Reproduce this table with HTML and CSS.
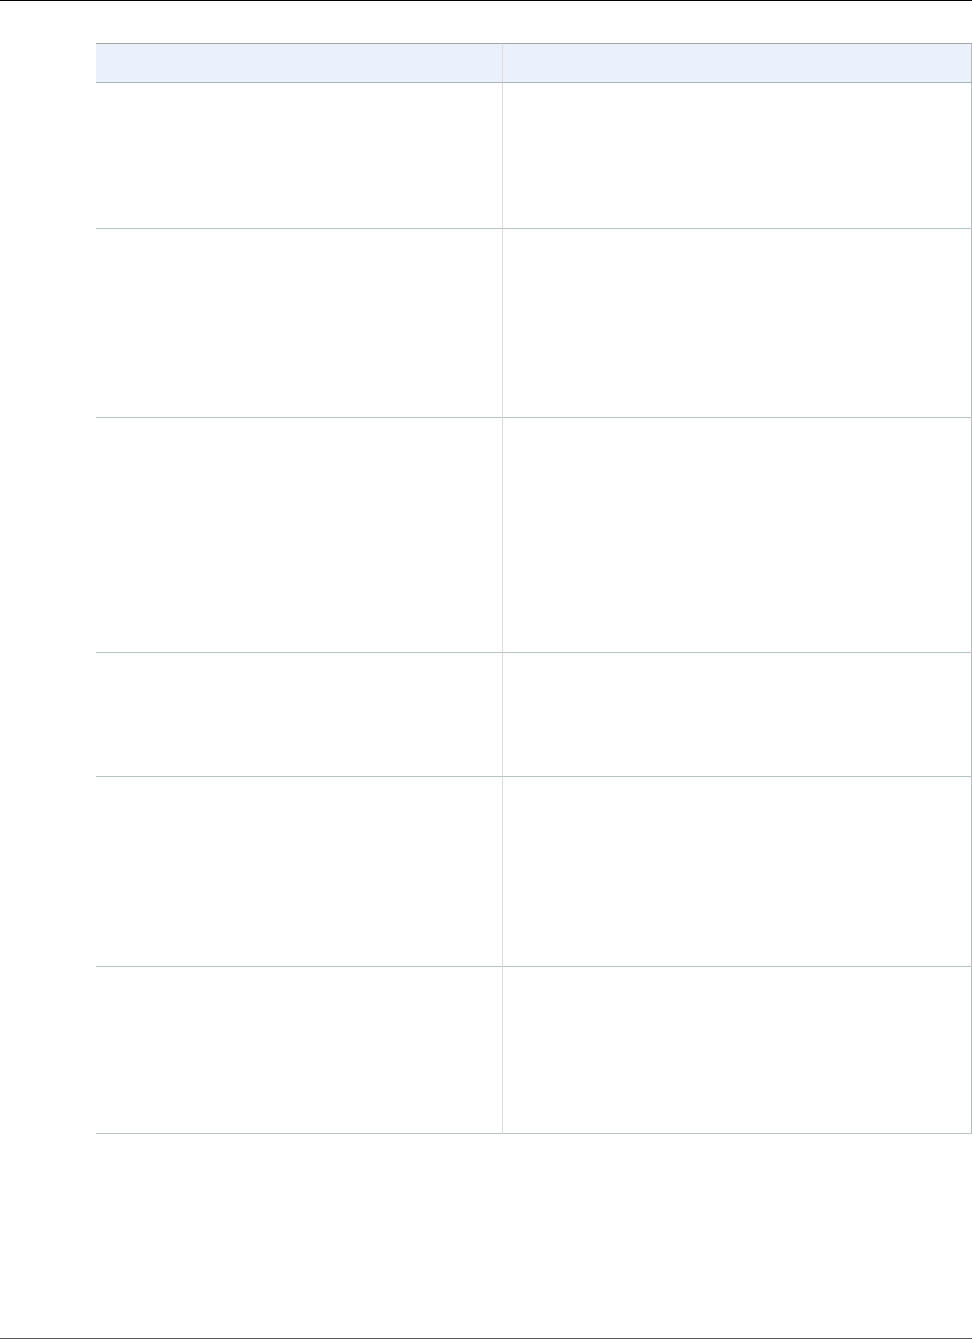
FILE: index.html
```html
<!DOCTYPE html>
<html lang="en">
<head>
  <meta charset="UTF-8">
  <meta name="viewport" content="width=device-width, initial-scale=1.0">
  <title>Table</title>
  <link rel="stylesheet" href="styles.css">
</head>
<body>
  <div class="page">
    <div class="top-rule"></div>
    <main class="content">
      <table class="doc-table">
        <thead>
          <tr>
            <th></th>
            <th></th>
          </tr>
        </thead>
        <tbody>
          <tr class="row-1"><td></td><td></td></tr>
          <tr class="row-2"><td></td><td></td></tr>
          <tr class="row-3"><td></td><td></td></tr>
          <tr class="row-4"><td></td><td></td></tr>
          <tr class="row-5"><td></td><td></td></tr>
          <tr class="row-6"><td></td><td></td></tr>
        </tbody>
      </table>
    </main>
    <footer class="bottom-rule"></footer>
  </div>
</body>
</html>
```

FILE: styles.css
```css
body {
  margin: 0;
  padding: 0;
  font-family: 'Liberation Sans', Arial, sans-serif;
  font-size: 13px;
  color: #000;
  background: #fff;
}
.page {
  display: flex;
  flex-direction: column;
  min-height: 100vh;
}
.top-rule {
  border-top: 1px solid #000;
}
.content {
  padding: 42px 0 0 96px;
}
.doc-table {
  border-collapse: separate;
  border-spacing: 0;
  width: 876px;
  table-layout: fixed;
}
.doc-table th,
.doc-table td {
  box-sizing: border-box;
  padding: 0;
  vertical-align: top;
  text-align: left;
}
.doc-table th:first-child,
.doc-table td:first-child {
  width: 407px;
  border-right: 1px solid #dcdcdc;
}
.doc-table th:last-child,
.doc-table td:last-child {
  width: 469px;
  border-right: 1px solid #b3bbbb;
}
.doc-table th {
  height: 40px;
  background: #eaf1fd;
  border-top: 1px solid #9da7a7;
  border-bottom: 1px solid #a9b5b5;
}
.doc-table td {
  border-bottom: 1px solid #b8c2c2;
}
.row-1 td { height: 146px; }
.row-2 td { height: 189px; }
.row-3 td { height: 235px; }
.row-4 td { height: 124px; }
.row-5 td { height: 190px; }
.row-6 td { height: 167px; }
.bottom-rule {
  margin-top: auto;
  border-bottom: 1px solid #555;
}
```
